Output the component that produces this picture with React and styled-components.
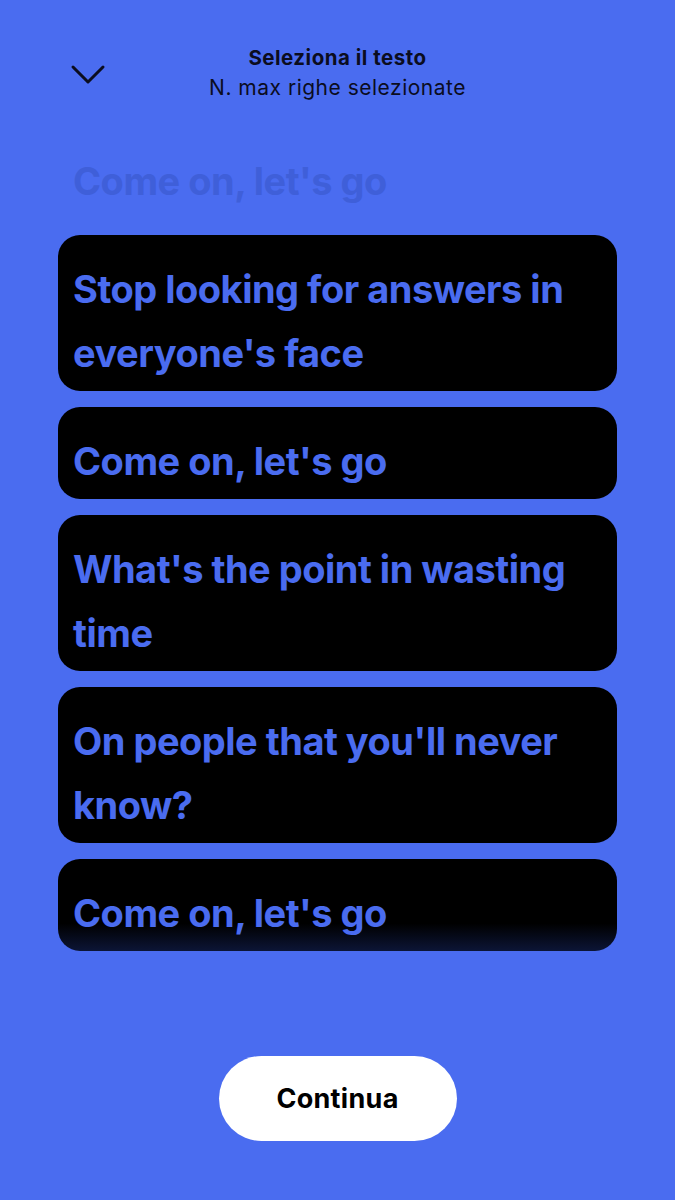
import React from "react";
import styled, { createGlobalStyle } from "styled-components";

const BLUE = "#4a6cf0";

const lines = [
  { text: "Come on, let's go", ghost: true },
  { text: "Stop looking for answers in everyone's face" },
  { text: "Come on, let's go" },
  { text: "What's the point in wasting time" },
  { text: "On people that you'll never know?" },
  { text: "Come on, let's go", fade: true },
];

const GlobalStyle = createGlobalStyle`
  body {
    margin: 0;
    background: ${BLUE};
    font-family: Inter, "Liberation Sans", sans-serif;
  }
`;

const Page = styled.div`
  width: 675px;
  height: 1200px;
  background: ${BLUE};
  display: flex;
  flex-direction: column;
  box-sizing: border-box;
  padding-top: 44px;
`;

const Header = styled.header`
  display: grid;
  grid-template-columns: 150px 1fr 150px;
  align-items: center;
`;

const BackButton = styled.button`
  justify-self: start;
  margin-left: 70px;
  padding: 0;
  border: none;
  background: none;
  display: flex;
`;

const Titles = styled.div`
  text-align: center;
  color: #0b0d1f;
`;

const Title = styled.div`
  font-size: 20.5px;
  font-weight: 700;
  line-height: 28px;
  letter-spacing: 0.5px;
`;

const Subtitle = styled.div`
  font-size: 21px;
  font-weight: 400;
  line-height: 32px;
  letter-spacing: 0.5px;
`;

const List = styled.div`
  display: flex;
  flex-direction: column;
  gap: 16px;
  padding: 0 58px;
  margin-top: 23px;
`;

const Card = styled.div`
  padding: 22px 40px 6px 15px;
  border-radius: 22px;
  background: ${(p) =>
    p.$ghost
      ? "transparent"
      : p.$fade
      ? "linear-gradient(180deg, #000 70%, #0c1536 100%)"
      : "#000"};
  color: ${(p) => (p.$ghost ? "#3f5fd9" : BLUE)};
  font-size: 38px;
  font-weight: 700;
  line-height: 64px;
  letter-spacing: -0.5px;
`;

const Footer = styled.div`
  display: flex;
  justify-content: center;
  margin-top: 105px;
`;

const ContinueButton = styled.button`
  width: 238px;
  height: 85px;
  border: none;
  border-radius: 43px;
  background: #fff;
  color: #000;
  font-family: Inter, "Liberation Sans", sans-serif;
  font-size: 27px;
  font-weight: 700;
  letter-spacing: 0.3px;
`;

const Chevron = () => (
  <svg width="36" height="22" viewBox="0 0 36 22" fill="none">
    <path
      d="M3 4 L18 19 L33 4"
      stroke="#0b0d1f"
      strokeWidth="3"
      strokeLinecap="round"
      strokeLinejoin="round"
    />
  </svg>
);

const App = () => {
  return (
    <Page>
      <GlobalStyle />
      <Header>
        <BackButton aria-label="Chiudi">
          <Chevron />
        </BackButton>
        <Titles>
          <Title>Seleziona il testo</Title>
          <Subtitle>N. max righe selezionate</Subtitle>
        </Titles>
        <div />
      </Header>
      <List>
        {lines.map((line, i) => (
          <Card key={i} $ghost={line.ghost} $fade={line.fade}>
            {line.text}
          </Card>
        ))}
      </List>
      <Footer>
        <ContinueButton>Continua</ContinueButton>
      </Footer>
    </Page>
  );
};

export default App;
